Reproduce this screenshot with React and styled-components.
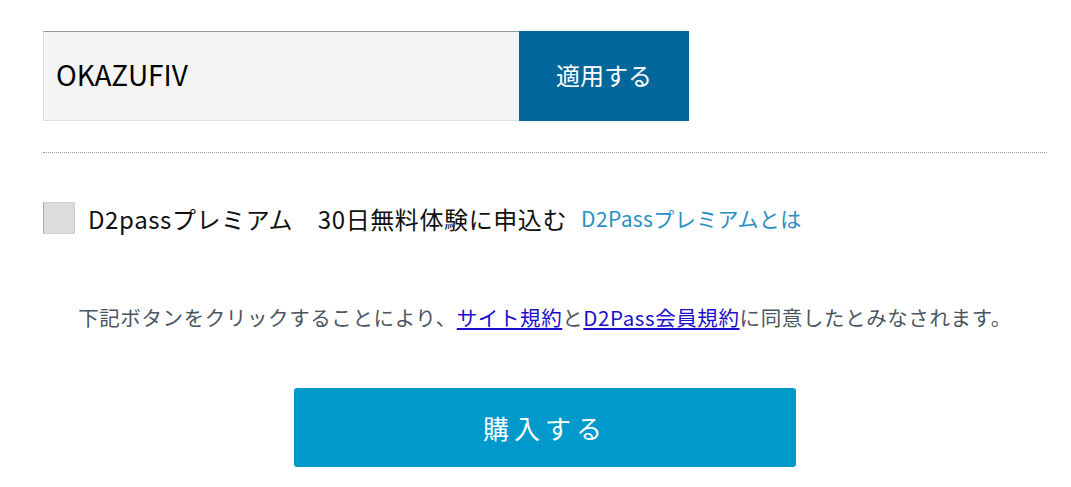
import React, { useState } from 'react'
import styled, { createGlobalStyle } from 'styled-components'

const GlobalStyle = createGlobalStyle`
  body {
    margin: 0;
    background: #fff;
    font-family: "Noto Sans CJK JP", "Noto Sans", sans-serif;
  }
`

const Container = styled.div`
  padding: 31px 24px 0 43px;
`

const CouponRow = styled.div`
  display: flex;
  width: 646px;
  height: 90px;
`

const CouponInput = styled.input`
  flex: 1;
  box-sizing: border-box;
  height: 90px;
  background: #f4f4f4;
  border: 1px solid #dedede;
  border-top-color: #9a9a9a;
  border-right: none;
  padding: 0 12px 4px;
  font-family: "Noto Sans CJK JP", "Noto Sans", sans-serif;
  font-size: 28px;
  color: #000;
  &:focus { outline: none; }
`

const ApplyButton = styled.button`
  width: 170px;
  border: none;
  background: #04679b;
  color: #fff;
  font-family: "Noto Sans CJK JP", sans-serif;
  font-size: 24px;
  padding-bottom: 4px;
  cursor: pointer;
`

const Divider = styled.hr`
  margin: 31px 0 0;
  border: none;
  border-top: 1px dotted #999;
`

const CheckRow = styled.label`
  display: flex;
  align-items: center;
  margin-top: 49px;
  height: 32px;
  cursor: pointer;
`

const Box = styled.span`
  width: 32px;
  height: 32px;
  box-sizing: border-box;
  background: ${p => (p.checked ? '#04679b' : '#dcdcdc')};
  border: 1px solid #d0d0d0;
  border-left-color: #a8a8a8;
  flex-shrink: 0;
`

const CheckText = styled.span`
  margin-left: 13px;
  font-size: 24px;
  color: #111;
  letter-spacing: 0.6px;
`

const InfoLink = styled.a`
  margin-left: 14px;
  font-size: 21px;
  color: #2a8fc2;
  letter-spacing: 0.4px;
  text-decoration: none;
`

const Terms = styled.p`
  margin: 68px 0 0;
  text-align: center;
  font-size: 20.5px;
  color: #4a5562;
  letter-spacing: 0.6px;
`

const TermsLink = styled.a`
  color: #1a0dcc;
  text-decoration: underline;
`

const ButtonWrap = styled.div`
  display: flex;
  justify-content: center;
  margin-top: 56px;
`

const BuyButton = styled.button`
  width: 502px;
  height: 79px;
  border: none;
  border-radius: 3px;
  background: #0099cc;
  color: #fff;
  font-family: "Noto Sans CJK JP", sans-serif;
  font-size: 26px;
  letter-spacing: 5px;
  box-shadow: 3px 11px 0 -8px #b4b4b4;
  cursor: pointer;
`

export default function App() {
  const [code, setCode] = useState('OKAZUFIV')
  const [premium, setPremium] = useState(false)

  return (
    <>
      <GlobalStyle />
      <Container>
        <CouponRow>
          <CouponInput value={code} onChange={e => setCode(e.target.value)} />
          <ApplyButton>適用する</ApplyButton>
        </CouponRow>
        <Divider />
        <CheckRow onClick={() => setPremium(!premium)}>
          <Box checked={premium} />
          <CheckText>D2passプレミアム　30日無料体験に申込む</CheckText>
          <InfoLink href="#">D2Passプレミアムとは</InfoLink>
        </CheckRow>
        <Terms>
          下記ボタンをクリックすることにより、<TermsLink href="#">サイト規約</TermsLink>と<TermsLink href="#">D2Pass会員規約</TermsLink>に同意したとみなされます。
        </Terms>
        <ButtonWrap>
          <BuyButton>購入する</BuyButton>
        </ButtonWrap>
      </Container>
    </>
  )
}
